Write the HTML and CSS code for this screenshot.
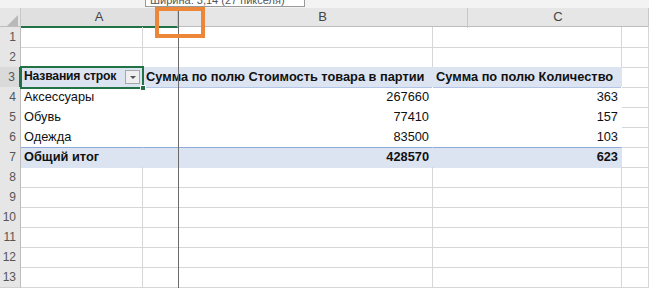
FILE: index.html
```
<!DOCTYPE html>
<html lang="ru">
<head>
    <meta charset="UTF-8">
    <title>Сводная таблица</title>
    <link rel="stylesheet" href="styles.css">
</head>
<body>

<div class="wrap">
    <!--верхняя полоса с подсказкой ширины-->
    <div class="top">
        <div class="tip">Ширина: 3,14 (27 пикселя)</div>
    </div>

    <!--заголовки столбцов-->
    <div class="colhead">
        <div class="corner"><span class="tri"></span></div>
        <div class="ch ch-a">A</div>
        <div class="ch ch-b">B</div>
        <div class="ch ch-c">C</div>
    </div>

    <!--строки листа-->
    <div class="sheet">
        <div class="row"><div class="rh">1</div><div class="c"></div><div class="c"></div><div class="c"></div><div class="c"></div></div>
        <div class="row"><div class="rh">2</div><div class="c"></div><div class="c"></div><div class="c"></div><div class="c"></div></div>
        <div class="row pv-head">
            <div class="rh rh-sel">3</div>
            <div class="c p sel">Названия строк<span class="dd"></span><span class="handle"></span></div>
            <div class="c p">Сумма по полю Стоимость товара в партии</div>
            <div class="c p">Сумма по полю Количество</div>
            <div class="c"></div>
        </div>
        <div class="row"><div class="rh">4</div><div class="c p">Аксессуары</div><div class="c p num">267660</div><div class="c p num">363</div><div class="c"></div></div>
        <div class="row"><div class="rh">5</div><div class="c p">Обувь</div><div class="c p num">77410</div><div class="c p num">157</div><div class="c"></div></div>
        <div class="row"><div class="rh">6</div><div class="c p">Одежда</div><div class="c p num">83500</div><div class="c p num">103</div><div class="c"></div></div>
        <div class="row pv-total"><div class="rh">7</div><div class="c p">Общий итог</div><div class="c p num">428570</div><div class="c p num">623</div><div class="c"></div></div>
        <div class="row"><div class="rh">8</div><div class="c"></div><div class="c"></div><div class="c"></div><div class="c"></div></div>
        <div class="row"><div class="rh">9</div><div class="c"></div><div class="c"></div><div class="c"></div><div class="c"></div></div>
        <div class="row"><div class="rh">10</div><div class="c"></div><div class="c"></div><div class="c"></div><div class="c"></div></div>
        <div class="row"><div class="rh">11</div><div class="c"></div><div class="c"></div><div class="c"></div><div class="c"></div></div>
        <div class="row"><div class="rh">12</div><div class="c"></div><div class="c"></div><div class="c"></div><div class="c"></div></div>
        <div class="row"><div class="rh">13</div><div class="c"></div><div class="c"></div><div class="c"></div><div class="c"></div></div>
    </div>

    <!--линия изменения ширины и рамка-->
    <div class="guide"></div>
    <div class="mark"></div>
</div>

</body>
</html>
```

FILE: styles.css
```
* {
    margin: 0;
    padding: 0;
    box-sizing: border-box;
}

body {
    width: 649px;
    height: 288px;
    overflow: hidden;
    background-color: #fff;
    font-family: "Liberation Sans", Arial, sans-serif;
    color: #111;
}

.wrap {
    position: relative;
    width: 649px;
    height: 288px;
}

.top {
    height: 8px;
    background-color: #f3f3f3;
    position: relative;
}

.tip {
    position: absolute;
    left: 145px;
    top: -7px;
    width: 160px;
    height: 14px;
    background-color: #fff;
    border: 1px solid #9a9a9a;
    font-size: 11px;
    line-height: 12px;
    color: #555;
    padding-left: 4px;
    white-space: nowrap;
    overflow: hidden;
}

.colhead {
    display: grid;
    grid-template-columns: 21px 157px 290px 181px;
    height: 19px;
    background-color: #e6e6e6;
    border-bottom: 1px solid #bdbdbd;
}

.corner {
    position: relative;
    border-right: 1px solid #c8c8c8;
}

.corner .tri {
    position: absolute;
    right: 2px;
    bottom: 2px;
    width: 0;
    height: 0;
    border-left: 11px solid transparent;
    border-bottom: 11px solid #b9b9b9;
}

.ch {
    text-align: center;
    font-size: 13px;
    line-height: 18px;
    color: #444;
    border-right: 1px solid #c8c8c8;
}

.ch-a {
    background-color: #e0e0e0;
    border-bottom: 2px solid #217346;
}

.sheet {
    display: flex;
    flex-direction: column;
}

.row {
    display: grid;
    grid-template-columns: 21px 122px 290px 189px 27px;
    height: 20px;
}

.rh {
    background-color: #e6e6e6;
    border-right: 1px solid #bdbdbd;
    border-bottom: 1px solid #d0d0d0;
    text-align: right;
    padding-right: 4px;
    font-size: 12px;
    line-height: 20px;
    color: #555;
}

.rh-sel {
    background-color: #dadada;
    border-right: 2px solid #217346;
}

.c {
    border-right: 1px solid #d6d6d6;
    border-bottom: 1px solid #d6d6d6;
    font-size: 12.8px;
    line-height: 19px;
    padding: 0 3px;
    white-space: nowrap;
    position: relative;
}

/* ячейки сводной таблицы без сетки */
.c.p {
    border-right-color: #fff;
    border-bottom-color: #fff;
}

.num {
    text-align: right;
}

.pv-head .c.p {
    background-color: #dce4f2;
    border-right-color: #dce4f2;
    border-bottom: 1px solid #b4c6e7;
    font-weight: bold;
}

.pv-total .c.p {
    background-color: #dce4f2;
    border-right-color: #dce4f2;
    border-bottom-color: #dce4f2;
    font-weight: bold;
    border-top: 1px solid #8eaadb;
    line-height: 18px;
}

.pv-head .sel {
    font-size: 12.2px;
    letter-spacing: -0.2px;
    outline: 2px solid #217346;
    outline-offset: -1px;
    z-index: 2;
}

.dd {
    position: absolute;
    right: 2px;
    top: 3px;
    width: 15px;
    height: 14px;
    background-color: #efefef;
    border: 1px solid #a8a8a8;
}

.dd::after {
    content: "";
    position: absolute;
    left: 4px;
    top: 5px;
    border-left: 3px solid transparent;
    border-right: 3px solid transparent;
    border-top: 3px solid #555;
}

.handle {
    position: absolute;
    right: -4px;
    bottom: -4px;
    width: 6px;
    height: 6px;
    background-color: #217346;
    border: 1px solid #fff;
}

.guide {
    position: absolute;
    left: 178px;
    top: 8px;
    width: 1px;
    height: 280px;
    background-color: #6a6a6a;
    z-index: 3;
}

.mark {
    position: absolute;
    left: 155px;
    top: 7px;
    width: 50px;
    height: 31px;
    border: 4px solid #ec8638;
    z-index: 4;
}
```
